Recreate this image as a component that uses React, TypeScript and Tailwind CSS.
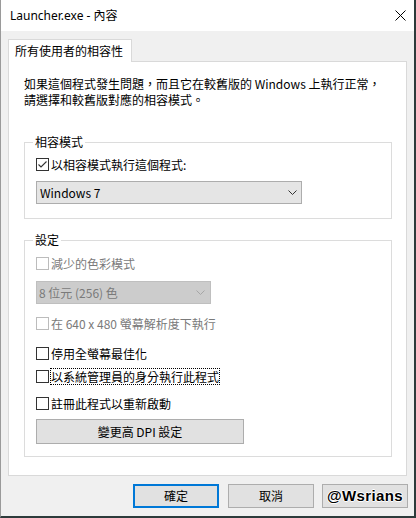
import React from "react";

function Check({ checked, disabled }: { checked?: boolean; disabled?: boolean }) {
  return (
    <span
      className={`w-[13px] h-[13px] border shrink-0 flex items-center justify-center bg-white ${
        disabled ? "border-[#bcbcbc]" : "border-[#333333]"
      }`}
    >
      {checked && (
        <svg width="11" height="11" viewBox="0 0 11 11">
          <path d="M1.5 5.5 L4 8 L9.5 2.5" stroke="#333333" strokeWidth="1.1" fill="none" />
        </svg>
      )}
    </span>
  );
}

function Row({
  checked,
  disabled,
  label,
  focus,
  className = "",
}: {
  checked?: boolean;
  disabled?: boolean;
  label: string;
  focus?: boolean;
  className?: string;
}) {
  return (
    <div className={`flex items-center h-[13px] ${className}`}>
      <Check checked={checked} disabled={disabled} />
      {focus ? (
        <span className="ml-px border border-dotted border-black leading-[15px] text-[12px] text-black whitespace-nowrap">
          {label}
        </span>
      ) : (
        <span
          className={`ml-[2px] leading-[16px] text-[12px] whitespace-nowrap ${
            disabled ? "text-[#7a7a7a]" : "text-black"
          }`}
        >
          {label}
        </span>
      )}
    </div>
  );
}

function Chevron({ color }: { color: string }) {
  return (
    <svg width="9" height="5" viewBox="0 0 9 5">
      <path d="M0.5 0.5 L4.5 4.5 L8.5 0.5" stroke={color} strokeWidth="1" fill="none" />
    </svg>
  );
}

export default function App() {
  return (
    <div className="w-[416px] h-[518px] flex flex-col border-l border-l-[#9a9a9a] border-r-2 border-r-[#2d3b3b] border-b-2 border-b-[#2d3b3b] bg-[#f0f0f0] font-['Noto_Sans_CJK_TC','Noto_Sans',sans-serif] text-black">
      {/* Title bar */}
      <div className="h-[31px] bg-white flex items-center justify-between pl-[9px] pr-[8px] shrink-0">
        <span className="text-[12px] font-['Noto_Sans','Noto_Sans_CJK_TC',sans-serif]">Launcher.exe - 內容</span>
        <svg width="11" height="11" viewBox="0 0 11 11">
          <path d="M0.5 0.5 L10.5 10.5 M10.5 0.5 L0.5 10.5" stroke="#000" strokeWidth="1" fill="none" />
        </svg>
      </div>

      {/* Body */}
      <div className="flex-1 flex flex-col pl-[7px] pt-[8px]">
        {/* Tab */}
        <div className="relative z-10 -mb-px w-[124px] h-[23px] bg-white border-t border-l border-r border-[#d9d9d9] flex items-center pl-[6px]">
          <span className="text-[12px] leading-[16px]">所有使用者的相容性</span>
        </div>

        {/* Panel */}
        <div className="w-[399px] h-[415px] bg-white border border-[#d9d9d9] flex flex-col pl-[15px] pt-[14px]">
          <p className="text-[12px] leading-[16px] whitespace-nowrap">
            如果這個程式發生問題，而且它在較舊版的 Windows 上執行正常，
            <br />
            請選擇和較舊版對應的相容模式。
          </p>

          {/* Group 1 */}
          <div className="mt-[34px] w-[368px] border border-[#dcdcdc] flex flex-col pl-[11px] pb-[14px]">
            <div className="-mt-[9px] -ml-[3px] w-fit px-[2px] bg-white text-[12px] leading-[16px]">相容模式</div>
            <Row checked label="以相容模式執行這個程式:" className="mt-[8px]" />
            <div className="mt-[10px] w-[266px] h-[23px] bg-[#e5e5e5] border border-[#adadad] flex items-center justify-between pl-[3px] pr-[4px]">
              <span className="text-[12px] leading-[16px]">Windows 7</span>
              <Chevron color="#333333" />
            </div>
          </div>

          {/* Group 2 */}
          <div className="mt-[21px] w-[368px] border border-[#dcdcdc] flex flex-col pl-[11px] pb-[12px]">
            <div className="-mt-[9px] -ml-[3px] w-fit px-[2px] bg-white text-[12px] leading-[16px]">設定</div>
            <Row disabled label="減少的色彩模式" className="mt-[9px]" />
            <div className="mt-[11px] w-[175px] h-[23px] bg-[#cccccc] border border-[#bfbfbf] flex items-center justify-between pl-[2px] pr-[5px]">
              <span className="text-[12px] leading-[16px] text-[#7a7a7a]">8 位元 (256) 色</span>
              <Chevron color="#a6a6a6" />
            </div>
            <Row disabled label="在 640 x 480 螢幕解析度下執行" className="mt-[13px]" />
            <Row label="停用全螢幕最佳化" className="mt-[17px]" />
            <Row focus label="以系統管理員的身分執行此程式" className="mt-[10px]" />
            <Row label="註冊此程式以重新啟動" className="mt-[14px]" />
            <div className="mt-[9px] w-[208px] h-[25px] bg-[#e1e1e1] border border-[#adadad] flex items-center justify-center">
              <span className="text-[12px] leading-[16px]">變更高 DPI 設定</span>
            </div>
          </div>
        </div>

        {/* Buttons */}
        <div className="mt-[8px] flex pl-[125px]">
          <div className="w-[86px] h-[24px] bg-[#e1e1e1] border-2 border-[#0078d7] flex items-center justify-center">
            <span className="text-[12px] leading-[16px]">確定</span>
          </div>
          <div className="ml-[9px] w-[86px] h-[24px] bg-[#e1e1e1] border border-[#adadad] flex items-center justify-center">
            <span className="text-[12px] leading-[16px]">取消</span>
          </div>
          <div className="ml-[8px] w-[86px] h-[24px] bg-[#e1e1e1] border border-[#adadad] flex items-center justify-center">
            <span className="font-['Liberation_Sans',sans-serif] font-bold text-[15px] leading-[16px] tracking-[0.4px] text-black [text-shadow:1px_0_#fff,-1px_0_#fff,0_1px_#fff,0_-1px_#fff]">
              @Wsrians
            </span>
          </div>
        </div>
      </div>
    </div>
  );
}
